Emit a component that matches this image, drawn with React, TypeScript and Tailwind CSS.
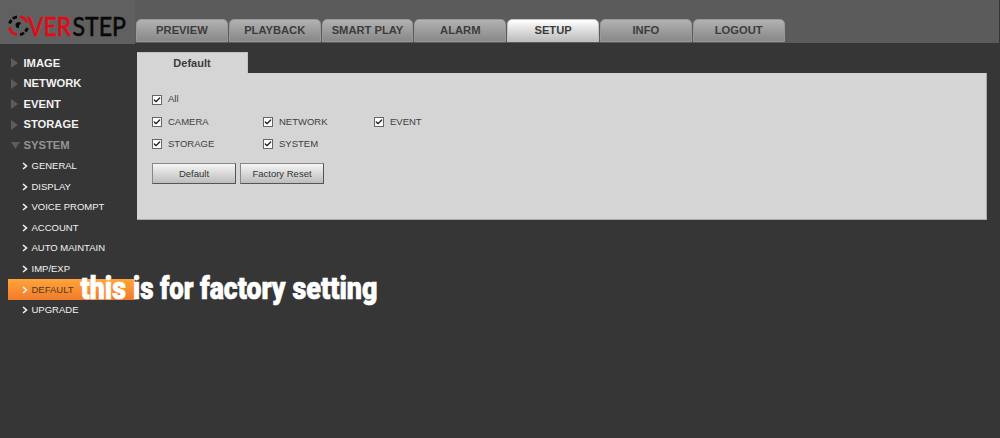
import { Check } from "lucide-react";

const tabs = ["PREVIEW", "PLAYBACK", "SMART PLAY", "ALARM", "SETUP", "INFO", "LOGOUT"];
const sections = ["IMAGE", "NETWORK", "EVENT", "STORAGE"];
const pages = ["GENERAL", "DISPLAY", "VOICE PROMPT", "ACCOUNT", "AUTO MAINTAIN", "IMP/EXP", "DEFAULT", "UPGRADE"];

function Logo() {
  return (
    <svg className="h-11 w-[135px] shrink-0 bg-[#606060]" viewBox="0 0 135 44">
      <g fill="none" strokeWidth="2.8">
        <path d="M9.500 23.500A9.200 9.200 0 0 1 11.500 20M12.800 18.600A9.200 9.200 0 0 1 17 16.800" stroke="#090909" />
        <path d="M20 16.800A9.200 9.200 0 0 1 27.200 22.500M9.500 27.500A9.200 9.200 0 0 0 17 34.700" stroke="#e20a17" />
        <path d="M20 34.700A9.200 9.200 0 0 0 24 32.700M25.300 31.500A9.200 9.200 0 0 0 27.500 28" stroke="#090909" />
      </g>
      <path d="M15.500 25.500A3 3 0 0 1 21 23.500L19 25.500V28A3 3 0 0 1 15.500 25.500Z" fill="#090909" />
      <g fontFamily="Lato, sans-serif" fontSize="27.500" strokeWidth="0.6">
        <text x="28" y="35.500" textLength="43" lengthAdjust="spacingAndGlyphs" fill="#e20a17" stroke="#e20a17">VER</text>
        <text x="72.500" y="35.500" textLength="53.500" lengthAdjust="spacingAndGlyphs" fill="#090909" stroke="#090909">STEP</text>
      </g>
    </svg>
  );
}

function Box({ label }: { label: string }) {
  return (
    <label className="flex h-[22.200px] w-[111px] items-center gap-[6px] text-[9.500px] text-[#404040]">
      <span className="flex size-[10px] items-center justify-center border border-[#666] bg-white">
        <Check size={8} strokeWidth={4} color="#222" />
      </span>
      {label}
    </label>
  );
}

export default function App() {
  return (
    <div className="relative h-[438px] w-[1000px] overflow-hidden bg-[#363636] font-['Liberation_Sans',Arial,sans-serif]">
      <header className="mr-px flex h-[43px] items-start bg-[#5b5b5b]">
        <Logo />
        <nav className="mt-[18.500px] ml-px flex gap-px">
          {tabs.map((tab) => (
            <div
              key={tab}
              className={
                "flex h-[23.500px] w-[91.800px] items-center justify-center rounded-t-[5px] border bg-linear-to-b text-[11.200px] font-bold text-[#3c3c3c] " +
                (tab === "SETUP"
                  ? "border-[#c2c2c2] from-white to-[#bdbdbd]"
                  : "border-[#999] from-[#b2b2b2] to-[#888]")
              }
            >
              {tab}
            </div>
          ))}
        </nav>
      </header>
      <div className="flex">
        <aside className="mt-[9.800px] w-[137px] pl-2">
          {sections.map((name) => (
            <div key={name} className="flex h-[20.600px] items-center gap-[5.500px] pl-[3px] text-[11.200px] font-bold text-[#f2f2f2]">
              <svg width="7" height="10" viewBox="0 0 7 10"><path d="M0 0L7 5L0 10Z" fill="#5c5c5c" /></svg>
              {name}
            </div>
          ))}
          <div className="flex h-[20.600px] items-center gap-[3.500px] pl-[3px] text-[11.200px] font-bold text-[#959595]">
            <svg width="9" height="7" viewBox="0 0 9 7"><path d="M0 0H9L4.500 7Z" fill="#5c5c5c" /></svg>
            SYSTEM
          </div>
          {pages.map((name) => (
            <div
              key={name}
              className={
                "flex h-[20.600px] w-[127px] items-center gap-[3.500px] pl-[14px] text-[9.500px] whitespace-nowrap " +
                (name === "DEFAULT" ? "bg-linear-to-b from-[#ffa53a] to-[#f17a2b] text-[#4c3828]" : "text-[#f2f2f2]")
              }
            >
              <svg className="shrink-0" width="6" height="8" viewBox="0 0 6 8">
                <path d="M1 1L4.500 4L1 7" fill="none" stroke="#f2f2f2" strokeWidth="1.6" />
              </svg>
              {name}
            </div>
          ))}
        </aside>
        <main className="mt-[9px] w-[850px]">
          <div className="flex h-[21px] w-[111px] items-center justify-center border-t border-r border-[#c2c2c2] bg-[#d5d5d5] text-[11px] font-bold text-[#3c3c3c]">
            Default
          </div>
          <section className="h-[147px] border-r border-b border-[#aaa] bg-[#d5d5d5] pt-[15.500px] pl-[15px]">
            <Box label="All" />
            <div className="flex"><Box label="CAMERA" /><Box label="NETWORK" /><Box label="EVENT" /></div>
            <div className="flex"><Box label="STORAGE" /><Box label="SYSTEM" /></div>
            <div className="mt-[7.900px] flex gap-1 text-[9.500px] text-[#333]">
              {["Default", "Factory Reset"].map((name) => (
                <button key={name} className="h-[21px] w-[84px] border border-t-[#888] border-r-[#555] border-b-[#555] border-l-[#888] bg-linear-to-b from-[#f5f5f5] to-[#bdbdbd] pt-px">
                  {name}
                </button>
              ))}
            </div>
          </section>
        </main>
      </div>
      <svg className="absolute top-[265px] left-[70px]" width="330" height="50">
        <g fontFamily="Roboto, sans-serif" fontWeight="900" fontSize="32" fill="#fff" stroke="#fff" strokeWidth="0.7">
          <text x="10.500" y="34" textLength="45.500" lengthAdjust="spacingAndGlyphs">this</text>
          <text x="63" y="34" textLength="20.500" lengthAdjust="spacingAndGlyphs">is</text>
          <text x="90" y="34" textLength="33.500" lengthAdjust="spacingAndGlyphs">for</text>
          <text x="130" y="34" textLength="85.500" lengthAdjust="spacingAndGlyphs">factory</text>
          <text x="222.500" y="34" textLength="85" lengthAdjust="spacingAndGlyphs">setting</text>
        </g>
      </svg>
    </div>
  );
}
